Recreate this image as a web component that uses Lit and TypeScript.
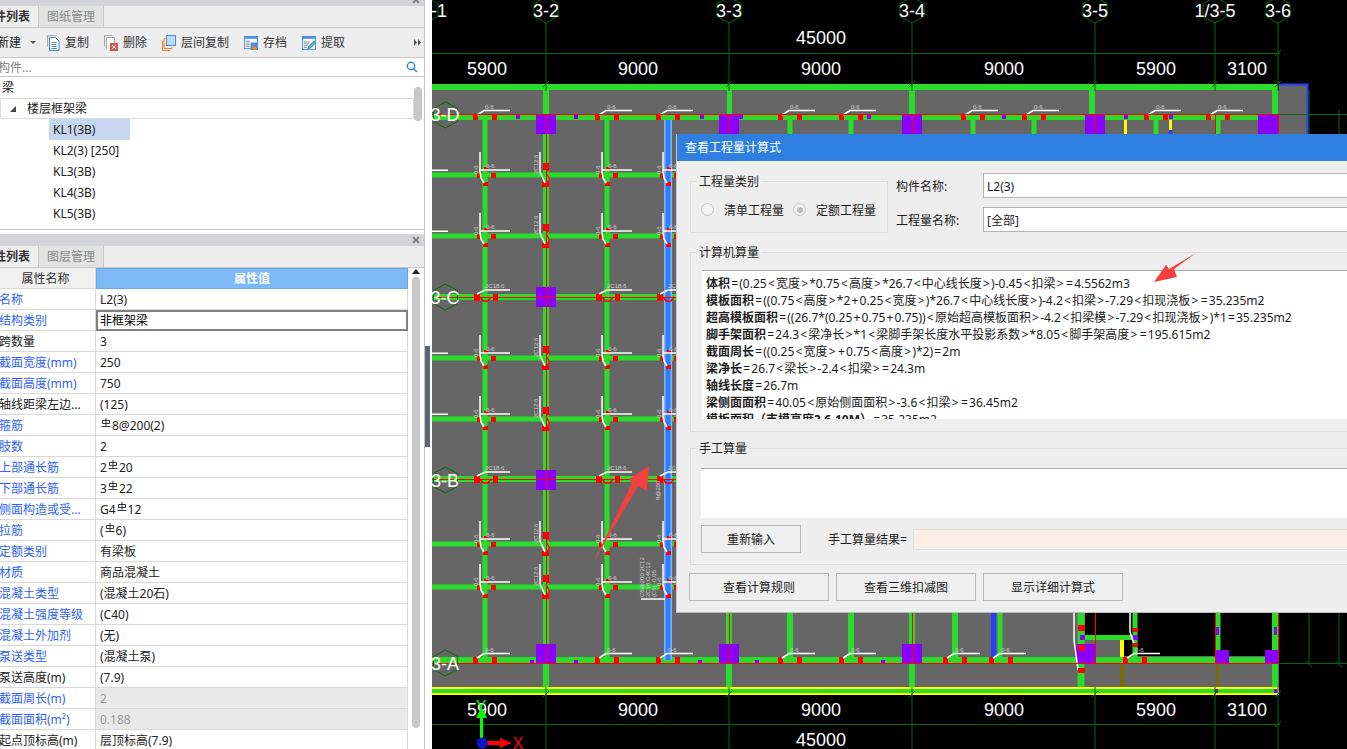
import { LitElement, html, css, svg } from 'lit';
import { customElement } from 'lit/decorators.js';

const GREEN = '#2adb2a';
const RED = '#ff0000';
const PURPLE = '#8a00ff';
const YELLOW = '#ffff00';
const AXIS = '#0b660b';
const GRAY = '#666666';

const rect = (x: number, y: number, w: number, h: number, fill: string) =>
  svg`<rect x=${x} y=${y} width=${w} height=${h} fill=${fill}></rect>`;
const line = (pts: string, color: string, width = 1) =>
  svg`<polyline points=${pts} fill="none" stroke=${color} stroke-width=${width}></polyline>`;
const hex = (x: number, y: number) =>
  svg`<polygon points="${x},${y - 13} ${x + 12},${y - 6.5} ${x + 12},${y + 6.5} ${x},${y + 13} ${x - 12},${y + 6.5} ${x - 12},${y - 6.5}" fill="none" stroke=${AXIS}></polygon>`;
const big = (x: number, y: number, t: string) =>
  svg`<text class="big" x=${x} y=${y} text-anchor="middle">${t}</text>`;
const tiny = (x: number, y: number, t: string, rot = false) =>
  svg`<text class="tiny" x=${x} y=${y} transform=${rot ? `rotate(-90 ${x} ${y})` : ''}>${t}</text>`;

// beam mark sitting on a main row: two red blocks plus white flag
function rowTag(x: number, y: number, t = '0-6') {
  return svg`
    ${rect(x - 12, y - 1, 5, 6, RED)}${rect(x + 7, y - 1, 5, 6, RED)}
    ${line(`${x - 8},${y} ${x - 1},${y - 4.5} ${x + 25},${y - 4.5}`, '#fff', 1.5)}
    ${tiny(x, y - 6, t)}`;
}

// mark at a secondary beam crossing
function junction(x: number, y: number) {
  return svg`
    ${rect(x - 8, y - 2, 4, 5, RED)}${rect(x + 6, y - 2, 5, 5, RED)}
    ${rect(x - 2, y + 7, 5, 4, RED)}${rect(x - 1, y - 8, 4, 4, RED)}
    ${line(`${x - 5},${y - 23} ${x - 5},${y - 3} ${x - 4},${y + 3} ${x - 1},${y + 8}`, '#fff', 1.5)}
    ${line(`${x - 5},${y - 5} ${x + 25},${y - 5}`, '#fff', 1.5)}
    ${tiny(x + 1, y - 7, '0-6')}${tiny(x - 7, y - 1, '0-6', true)}`;
}

function centerTag(y: number) {
  return svg`
    ${rect(543, y - 12, 6, 7, RED)}${rect(542, y + 7, 7, 5, RED)}
    <path d="M549 ${y - 5}q-5 2 -1 6q3 4 -1 6" fill="none" stroke=${RED} stroke-width="1.2"></path>
    ${line(`540,${y - 23} 540,${y - 3} 545,${y + 8}`, '#fff', 1.5)}
    ${tiny(538, y - 1, '2C12:6', true)}`;
}

function crossTag(x: number, y: number) {
  return svg`
    ${rect(x - 11, y - 3, 6, 7, RED)}${rect(x + 8, y - 3, 5, 7, RED)}
    <path d="M${x - 5} ${y}l3 4h5l3 -4" fill="none" stroke=${RED} stroke-width="1.5"></path>
    ${line(`${x - 8},${y - 3} ${x},${y - 7} ${x + 25},${y - 7}`, '#fff', 1.5)}
    ${tiny(x, y - 9, '2C18:6')}`;
}

@customElement('cad-canvas')
class CadCanvas extends LitElement {
  static styles = css`
    :host {
      display: block;
      position: absolute;
      inset: 0;
    }
    svg {
      display: block;
    }
    .big {
      font: 18px 'Liberation Sans', Arial, sans-serif;
      fill: #fff;
    }
    .tiny {
      font: 6px 'Liberation Sans', Arial, sans-serif;
      fill: #d0d0d0;
    }
    .xy {
      font: 16px 'Liberation Sans', Arial, sans-serif;
    }
  `;

  render() {
    const axes: [number, string][] = [
      [546, '3-2'], [729, '3-3'], [912, '3-4'], [1095, '3-5'], [1215, ''], [1278, '3-6']
    ];
    const mids = [485, 607, 668];
    const cross = [175, 236, 358, 419, 544, 587];
    const dTags = [485, 607, 668, 790, 851, 973, 1034, 1156, 1218];
    const aTags = [485, 607, 668, 790, 851, 955, 1001, 1135];
    const dDots = [516, 574, 700, 739, 867, 1002, 1124, 1169];
    const aDots = [530, 574, 698, 755, 881];
    const stubs = [790, 851, 973, 1034, 1156, 1218];
    const low: [number, number][] = [[790, 6], [851, 6], [955, 6], [1000, 5], [1135, 5], [1218, 5]];
    const through: [number, number][] = [[729, 6], [912, 6], [1081, 7], [1275, 6]];
    const dims: [number, string][] = [
      [487, '5900'], [638, '9000'], [821, '9000'], [1004, '9000'], [1156, '5900'], [1247, '3100']
    ];

    return html`<svg width="915" height="749" viewBox="432 0 915 749">
      ${rect(432, 0, 915, 749, '#000')}
      ${rect(432, 90, 847, 597, GRAY)}
      ${rect(1279, 85, 28, 60, GRAY)}
      ${line('1279,84.5 1307.5,84.5 1307.5,140', '#2a3cff', 2)}

      <!-- black bays bottom right -->
      ${rect(1085, 600, 187, 56, '#000')}
      ${rect(1085, 640, 35, 17, GRAY)}
      ${rect(1120, 640, 4, 17, YELLOW)}
      ${rect(1120, 663, 4, 24, '#7a6a00')}
      ${rect(1216, 663, 3, 24, '#7a6a00')}

      <!-- beams -->
      ${rect(432, 84, 846, 6, GREEN)}
      ${rect(432, 115, 846, 5, GREEN)}
      ${rect(432, 294, 300, 6, GREEN)}
      ${rect(432, 476, 300, 6, GREEN)}
      ${rect(432, 657, 846, 6, GREEN)}
      ${cross.map(y => rect(432, y - 2.5, 300, 5, GREEN))}
      ${rect(1085, 635, 50, 5, GREEN)}
      ${mids.map(x => rect(x - 2.5, 120, 5, 540, GREEN))}
      ${rect(543, 90, 6, 597, GREEN)}
      ${rect(727, 90, 5, 60, GREEN)}
      ${rect(909, 90, 6, 60, GREEN)}
      ${rect(1089, 90, 6, 25, GREEN)}
      ${rect(1272, 90, 6, 597, GREEN)}
      ${stubs.map(x => rect(x - 2.5, 120, 5, 30, GREEN))}
      ${low.map(([x, w]) => rect(x - w / 2, 600, w, 57, GREEN))}
      ${through.map(([x, w]) => rect(x - w / 2, 600, w, 87, GREEN))}
      ${rect(1124, 120, 3, 14, YELLOW)}
      ${rect(1169, 120, 3, 10, YELLOW)}
      ${rect(1169, 130, 3, 6, '#2a3cff')}
      ${rect(991, 600, 5, 57, '#2a3cff')}

      <!-- blue selected beam -->
      ${rect(664, 120, 8, 540, '#7fb2ff')}
      ${rect(665.5, 120, 5, 540, '#2f7ffb')}

      <!-- bottom edge beam -->
      ${rect(432, 687, 847, 8, YELLOW)}
      ${rect(432, 689, 846, 4, GREEN)}
      ${rect(1215, 689, 3, 4, PURPLE)}
      ${rect(1274, 689, 3, 4, PURPLE)}

      <!-- columns -->
      ${[[546, 114], [729, 114], [912, 114], [1095, 114], [1268, 114]].map(([x, y]) => rect(x - 10, y, 20, 20, PURPLE))}
      ${rect(536, 287, 20, 20, PURPLE)}
      ${rect(536, 470, 20, 20, PURPLE)}
      ${[536, 719, 902].map(x => rect(x, 644, 20, 19, PURPLE))}
      ${rect(1076, 644, 19, 19, PURPLE)}
      ${rect(1215, 650, 14, 13, PURPLE)}
      ${rect(1265, 650, 13, 13, PURPLE)}
      ${rect(1216, 627, 3, 8, PURPLE)}
      ${rect(1274, 627, 3, 8, PURPLE)}
      ${rect(1080, 635, 5, 5, PURPLE)}
      ${rect(1133, 635, 5, 5, PURPLE)}
      ${dDots.map(x => rect(x, 115, 4, 4, PURPLE))}
      ${aDots.map(x => rect(x, 660, 4, 3, PURPLE))}

      <!-- marks -->
      ${dTags.map(x => rowTag(x, 115))}
      ${aTags.map(x => rowTag(x, 658))}
      ${[297, 479].map(y => mids.map(x => crossTag(x, y)))}
      ${cross.map(y => mids.map(x => junction(x, y)))}
      ${cross.map(y => centerTag(y))}
      ${[175, 236, 358, 419].map(y => rect(432, y - 5.5, 16, 1.5, '#fff'))}
      ${line('1074,612 1074,640 1078,670', '#fff', 1.5)}
      ${rect(1078, 625, 7, 6, RED)}${rect(1078, 645, 7, 6, RED)}${rect(1078, 668, 7, 5, RED)}
      ${line('1130,612 1130,632 1134,644', '#fff', 1.5)}
      ${rect(1133, 628, 5, 4, RED)}${rect(1133, 643, 5, 4, RED)}
      ${line('641,599 665,599', '#fff', 1.5)}
      ${tiny(644, 597, 'C8@200 2C12', true)}${tiny(650, 597, '2C18 G4C12', true)}${tiny(656, 597, '(C6) -0.05', true)}
      ${tiny(660, 500, '8@200', true)}

      <!-- red centre lines -->
      ${rect(432, 114, 846, 1, RED)}
      ${rect(432, 663, 846, 1, RED)}
      ${rect(432, 479, 300, 1, RED)}
      ${rect(432, 297, 300, 1, RED)}
      ${rect(546, 114, 1, 549, RED)}
      ${[729, 912, 1095, 1215, 1278].map(x => rect(x, 114, 1, 30, RED))}
      ${[729, 912, 1095, 1215, 1278].map(x => rect(x, 600, 1, 63, RED))}

      <!-- axis lines and dimensions -->
      ${axes.map(([x]) => line(`${x},22 ${x},91`, AXIS))}
      ${axes.map(([x]) => line(`${x},687 ${x},749`, AXIS))}
      ${axes.map(([x]) => line(`${x - 3},87 ${x + 3},81`, AXIS))}
      ${axes.map(([x]) => line(`${x - 3},697 ${x + 3},691`, AXIS))}
      ${line('432,53.5 1280,53.5', AXIS)}
      ${line('432,724.5 1280,724.5', AXIS)}
      ${line('1275,56 1281,50', AXIS)}
      ${line('1275,727 1281,721', AXIS)}
      ${line('1279,114.5 1347,114.5', AXIS)}
      ${line('1278,663.5 1347,663.5', AXIS)}
      ${line('1309,90 1309,134', AXIS)}
      ${line('1339,110 1339,134', AXIS)}
      ${line('1309,612 1309,664', AXIS)}
      ${line('1339,612 1339,664', AXIS)}
      ${line('1306,661 1312,667', AXIS)}
      ${line('1336,661 1342,667', AXIS)}

      ${[[546, 10], [729, 10], [912, 10], [1095, 10], [1215, 10], [1278, 10]].map(([x, y]) => hex(x, y))}
      ${hex(426, 10)}
      ${[115, 297, 480, 663].map(y => hex(445.5, y))}
      ${big(439, 17, '-1')}
      ${axes.filter(a => a[1]).map(([x, t]) => big(x, 17, t))}
      ${big(1215, 17, '1/3-5')}
      ${big(445, 121, '3-D')}
      ${big(445, 304, '3-C')}
      ${big(445, 487, '3-B')}
      ${big(445, 670, '3-A')}
      ${big(821, 44, '45000')}
      ${dims.map(([x, t]) => big(x, 75, t))}
      ${dims.map(([x, t]) => big(x, 716, t))}
      ${big(821, 746, '45000')}

      <!-- ucs icon -->
      ${rect(480, 718, 3, 22, '#00ff00')}
      <polygon points="481.5,707 487,718 476,718" fill="#00ff00"></polygon>
      <text class="xy" x="481" y="712" text-anchor="middle" fill="#00ff00">Y</text>
      ${rect(486, 741, 14, 4, RED)}
      <polygon points="512,743 500,738 500,748" fill=${RED}></polygon>
      <text class="xy" x="518" y="749" text-anchor="middle" fill=${RED}>X</text>
      <circle cx="482" cy="743" r="5.5" fill="#0a14c8"></circle>

      <!-- annotation arrow -->
      <polygon points="593,563 632,483 629,479 649,466 647,491 638,486" fill="#f2403f"></polygon>
    </svg>`;
  }
}

const rebar = html`<svg class="rebar" width="10" height="10" viewBox="0 0 9 10">
  <path d="M1 2.500h7v3H1zM4.500 0v8.500M0 8.500h9" fill="none" stroke="#222" stroke-width="0.9"></path>
</svg>`;

type Row = { k: string; v: string; blue?: boolean; off?: boolean; edit?: boolean };

const rows: Row[] = [
  { k: '名称', v: 'L2(3)', blue: true },
  { k: '结构类别', v: '非框架梁', blue: true, edit: true },
  { k: '跨数量', v: '3' },
  { k: '截面宽度(mm)', v: '250', blue: true },
  { k: '截面高度(mm)', v: '750', blue: true },
  { k: '轴线距梁左边...', v: '(125)' },
  { k: '箍筋', v: '$8@200(2)', blue: true },
  { k: '肢数', v: '2', blue: true },
  { k: '上部通长筋', v: '2$20', blue: true },
  { k: '下部通长筋', v: '3$22', blue: true },
  { k: '侧面构造或受...', v: 'G4$12', blue: true },
  { k: '拉筋', v: '($6)', blue: true },
  { k: '定额类别', v: '有梁板', blue: true },
  { k: '材质', v: '商品混凝土', blue: true },
  { k: '混凝土类型', v: '(混凝土20石)', blue: true },
  { k: '混凝土强度等级', v: '(C40)', blue: true },
  { k: '混凝土外加剂', v: '(无)', blue: true },
  { k: '泵送类型', v: '(混凝土泵)', blue: true },
  { k: '泵送高度(m)', v: '(7.9)' },
  { k: '截面周长(m)', v: '2', blue: true, off: true },
  { k: '截面面积(m²)', v: '0.188', blue: true, off: true },
  { k: '起点顶标高(m)', v: '层顶标高(7.9)' }
];

const formulas: [string, string][] = [
  ['体积', '=(0.25<宽度>*0.75<高度>*26.7<中心线长度>)-0.45<扣梁>=4.5562m3'],
  ['模板面积', '=((0.75<高度>*2+0.25<宽度>)*26.7<中心线长度>)-4.2<扣梁>-7.29<扣现浇板>=35.235m2'],
  ['超高模板面积', '=((26.7*(0.25+0.75+0.75))<原始超高模板面积>-4.2<扣梁模>-7.29<扣现浇板>)*1=35.235m2'],
  ['脚手架面积', '=24.3<梁净长>*1<梁脚手架长度水平投影系数>*8.05<脚手架高度>=195.615m2'],
  ['截面周长', '=((0.25<宽度>+0.75<高度>)*2)=2m'],
  ['梁净长', '=26.7<梁长>-2.4<扣梁>=24.3m'],
  ['轴线长度', '=26.7m'],
  ['梁侧面面积', '=40.05<原始侧面面积>-3.6<扣梁>=36.45m2'],
  ['模板面积（支模高度3.6-10M）', '=35.235m2']
];

@customElement('app-root')
class AppRoot extends LitElement {
  static styles = css`
    :host {
      display: flex;
      width: 1347px;
      height: 749px;
      overflow: hidden;
      background: #fff;
      font: 12px/17px 'Noto Sans', 'Noto Sans CJK SC', sans-serif;
      color: #222;
    }
    .side {
      width: 424px;
      height: 749px;
      flex: none;
      overflow: hidden;
      border-right: 1px solid #c4c4c4;
    }
    .grip {
      width: 7px;
      flex: none;
    }
    .grip div {
      width: 5px;
      height: 101px;
      margin-top: 346px;
      background: #5e6670;
    }
    .canvas {
      position: relative;
      flex: 1;
      overflow: hidden;
      background: #000;
    }
    .title {
      height: 6px;
      background: #d3d4d9;
      display: flex;
      justify-content: flex-end;
      overflow: hidden;
    }
    .title.full {
      height: 12px;
      margin-top: 4px;
    }
    .x {
      width: 8px;
      height: 8px;
      margin: 2px 4px 0 0;
      flex: none;
    }
    .title:not(.full) .x {
      margin-top: -4px;
    }
    .tabs {
      height: 21px;
      display: flex;
      background: #eeeeee;
      border-bottom: 1px solid #c8c8c8;
    }
    .tab {
      width: 38px;
      line-height: 22px;
      overflow: hidden;
      white-space: nowrap;
      border-right: 1px solid #c8c8c8;
      color: #333;
      font-weight: 600;
    }
    .tab span {
      margin-left: -6px;
    }
    .tab.off {
      width: 64px;
      text-align: center;
      background: #e2e2e2;
      color: #888;
      font-weight: 400;
    }
    .toolbar {
      height: 29px;
      display: flex;
      align-items: center;
      gap: 15px;
      background: #eeeeee;
      border-bottom: 1px solid #c8c8c8;
    }
    .tool {
      display: flex;
      align-items: center;
      gap: 5px;
      white-space: nowrap;
      color: #333;
    }
    .tool svg {
      flex: none;
    }
    .new {
      width: 35px;
      flex: none;
      margin-left: -3px;
      display: flex;
      align-items: center;
      gap: 9px;
      white-space: nowrap;
    }
    .caret {
      width: 0;
      height: 0;
      border: 3px solid transparent;
      border-top: 3px solid #555;
      margin-top: 3px;
    }
    .more {
      margin-left: auto;
      margin-right: 3px;
    }
    .search {
      height: 18px;
      display: flex;
      align-items: center;
      justify-content: space-between;
      border-bottom: 1px solid #c8c8c8;
      color: #808080;
      padding-right: 6px;
    }
    .search span {
      margin-left: -2px;
    }
    .tree {
      height: 152px;
      display: flex;
      border-bottom: 1px solid #c8c8c8;
    }
    .nodes {
      flex: 1;
    }
    .node {
      height: 21px;
      line-height: 21px;
      display: flex;
      align-items: center;
      color: #222;
    }
    .node.root {
      padding-left: 2px;
    }
    .node.group {
      padding-left: 9px;
      gap: 11px;
    }
    .tri {
      width: 0;
      height: 0;
      border-left: 6px solid transparent;
      border-bottom: 6px solid #444;
    }
    .node.leaf {
      margin-left: 49px;
      padding-left: 4px;
      width: 77px;
      white-space: pre;
    }
    .node.sel {
      background: #c6d7ef;
    }
    .thumb {
      background: #c8c8c8;
      border-radius: 4px;
    }
    .tree .thumb {
      width: 8px;
      height: 34px;
      margin: 10px 2px 0 0;
    }
    .props {
      display: flex;
    }
    .grid {
      width: 408px;
      flex: none;
      display: grid;
      grid-template-columns: 96px 312px;
      grid-auto-rows: 21px;
    }
    .cell {
      border-bottom: 1px solid #d9d9d9;
      border-right: 1px solid #d9d9d9;
      line-height: 22px;
      white-space: nowrap;
      overflow: hidden;
      box-sizing: border-box;
    }
    .head {
      text-align: center;
      padding-right: 4px;
      background: #f0f0f0;
      color: #333;
    }
    .head.val {
      background: #7db8f7;
      color: #fff;
      font-weight: 700;
      padding: 0;
      border: 1px solid #69a8ee;
      line-height: 20px;
    }
    .key.blue {
      color: #2f62f5;
    }
    .key {
      color: #222;
      text-indent: -1px;
    }
    .val {
      padding-left: 4px;
    }
    .off {
      background: #e9e9e9;
      color: #9a9a9a;
    }
    .edit {
      border: 2px solid #7f7f7f;
      line-height: 18px;
      padding-left: 2px;
      color: #000;
    }
    .rebar {
      vertical-align: 2px;
      margin: 0 1px;
    }
    .bar {
      flex: 1;
      display: flex;
      flex-direction: column;
      align-items: center;
    }
    .up {
      width: 0;
      height: 0;
      margin-top: 1px;
      border: 4px solid transparent;
      border-bottom: 5px solid #222;
      border-top: 0;
    }
    .bar .thumb {
      width: 8px;
      height: 451px;
      margin-top: 3px;
    }
    .dialog {
      position: absolute;
      left: 245px;
      top: 134px;
      width: 720px;
      height: 478px;
      background: #eeeeee;
      border-bottom: 1px solid #b8bcc4;
      box-shadow: -1px 0 0 #c5cbd6;
      font-size: 12px;
      color: #1c1c1c;
    }
    .cap {
      height: 27px;
      line-height: 27px;
      padding-left: 8px;
      background: #2e7fdf;
      color: #fff;
    }
    .body {
      padding-left: 13px;
    }
    .top {
      display: flex;
      margin-top: 20px;
    }
    .group {
      position: relative;
      border: 1px solid #dcdcdc;
      box-sizing: border-box;
    }
    .legend {
      position: absolute;
      left: 6px;
      top: -9px;
      padding: 0 2px;
      background: #eeeeee;
    }
    .kind {
      width: 198px;
      height: 52px;
      display: flex;
      align-items: center;
      padding: 7px 0 0 10px;
    }
    .radio {
      width: 11px;
      height: 11px;
      margin-top: -2px;
      border: 1px solid #c4c4c4;
      border-radius: 50%;
      background: #f4f4f4;
      margin-right: 10px;
      flex: none;
      display: flex;
      align-items: center;
      justify-content: center;
    }
    .radio i {
      width: 6px;
      height: 6px;
      border-radius: 50%;
      background: #b8b8b8;
    }
    .kind span {
      margin-right: 9px;
      white-space: nowrap;
    }
    .fields {
      margin: -8px 0 0 8px;
      display: grid;
      grid-template-columns: 87px 400px;
      grid-auto-rows: 25px;
      row-gap: 9px;
      align-items: center;
    }
    .fields span {
      padding-top: 2px;
    }
    .input {
      height: 25px;
      line-height: 25px;
      box-sizing: border-box;
      background: #fff;
      border: 1px solid #b4b4b4;
      padding-left: 3px;
    }
    .calc {
      width: 700px;
      height: 180px;
      margin-top: 19px;
      padding: 17px 0 0 11px;
    }
    .text {
      height: 149px;
      box-sizing: border-box;
      overflow: hidden;
      background: #fff;
      border-top: 1px solid #a8a8a8;
      padding: 4px 0 0 4px;
      white-space: nowrap;
    }
    .text b {
      font-weight: 700;
    }
    .op {
      font-style: normal;
      margin: 0 1.2px;
    }
    .manual {
      width: 700px;
      height: 117px;
      margin-top: 16px;
      padding: 19px 0 0 10px;
    }
    .area {
      height: 49px;
      background: #fff;
      border-top: 1px solid #aeaeb6;
    }
    .redo {
      display: flex;
      align-items: center;
      margin-top: 7px;
    }
    .redo span {
      white-space: nowrap;
      flex: none;
    }
    .btn {
      height: 28px;
      line-height: 27px;
      flex: none;
      box-sizing: border-box;
      text-align: center;
      white-space: nowrap;
      border: 1px solid #b8b8b8;
      background: #efefef;
    }
    .redo .btn {
      width: 100px;
      margin-right: 27px;
    }
    .result {
      flex: none;
      width: 600px;
      height: 21px;
      margin-left: 6px;
      background: #f9efe6;
      border: 1px solid #e6e0da;
      box-sizing: border-box;
    }
    .foot {
      display: flex;
      gap: 7px;
      margin: 8px 0 0 -1px;
    }
    .foot .btn {
      width: 140px;
    }
    .note {
      position: absolute;
      left: 476px;
      top: 118px;
    }
  `;

  private close() {
    return html`<svg class="x" viewBox="0 0 8 8"><path d="M1 1l6 6M7 1l-6 6" stroke="#666" stroke-width="1.4"></path></svg>`;
  }

  private toolbar() {
    return html`<div class="toolbar">
      <div class="new"><span>新建</span><i class="caret"></i></div>
      <div class="tool">
        <svg width="13" height="16" viewBox="0 0 13 16">
          <path d="M.5 11.500V.5h8" fill="none" stroke="#a8a8a8"></path>
          <path d="M2.500 2.500h6l3.500 3.500v9.500h-9.500z" fill="#fff" stroke="#3d86d8"></path>
          <path d="M4.500 7.500h5M4.500 9.500h5M4.500 11.500h5M4.500 13.500h5" stroke="#3d86d8"></path>
        </svg>复制
      </div>
      <div class="tool">
        <svg width="14" height="16" viewBox="0 0 14 16">
          <path d="M.5 11.500V.5h8" fill="none" stroke="#a8a8a8"></path>
          <path d="M2.500 13.500V2.500h8v6" fill="#fff" stroke="#a8a8a8"></path>
          <rect x="6" y="8" width="8" height="8" fill="#d9534f"></rect>
          <path d="M8 10l4 4M12 10l-4 4" stroke="#fff"></path>
        </svg>删除
      </div>
      <div class="tool">
        <svg width="14" height="16" viewBox="0 0 14 16">
          <path d="M3.500 3.500H2V13.500H10V12" fill="none" stroke="#f0801e"></path>
          <path d="M.5 6v9.500H8" fill="none" stroke="#f0801e"></path>
          <rect x="4.500" y=".5" width="9" height="10" fill="#bcd8fb" stroke="#4a90e2"></rect>
        </svg>层间复制
      </div>
      <div class="tool">
        <svg width="14" height="14" viewBox="0 0 15 15">
          <rect x=".5" y=".5" width="14" height="13" fill="#f4f7fb" stroke="#4a90e2"></rect>
          <rect y="0" width="15" height="3" fill="#4a90e2"></rect>
          <path d="M2 5.500h4M2 7.500h4M2 9.500h4M2 11.500h4" stroke="#8a8a8a"></path>
          <rect x="7" y="7" width="8" height="8" fill="#4a90e2"></rect>
          <rect x="9" y="11" width="4" height="4" fill="#f0801e"></rect>
        </svg>存档
      </div>
      <div class="tool">
        <svg width="14" height="14" viewBox="0 0 15 15">
          <rect x=".5" y=".5" width="14" height="14" fill="#f4f7fb" stroke="#4a90e2"></rect>
          <rect y="0" width="15" height="3" fill="#4a90e2"></rect>
          <path d="M2 6.500h6M2 8.500h5M2 10.500h4M2 12.500h3" stroke="#8a8a8a"></path>
          <path d="M6 14l1-3 6-6 2 2-6 6z" fill="#3fb8d8" stroke="#555" stroke-width=".5"></path>
        </svg>提取
      </div>
      <svg class="more" width="7" height="7" viewBox="0 0 7 7"><path d="M0 0l3 3.500-3 3.500zM4 0l3 3.500-3 3.500z" fill="#555"></path></svg>
    </div>`;
  }

  private value(v: string) {
    const parts = v.split('$');
    return parts.map((p, i) => (i ? html`${rebar}${p}` : p));
  }

  // the source program sets < > = + wider than the latin font does
  private formula(f: string) {
    return f.split(/([<>=+])/).map((p, i) => (i % 2 ? html`<i class="op">${p}</i>` : p));
  }

  render() {
    return html`
      <div class="side">
        <div class="title">${this.close()}</div>
        <div class="tabs">
          <div class="tab"><span>件列表</span></div>
          <div class="tab off">图纸管理</div>
        </div>
        ${this.toolbar()}
        <div class="search">
          <span>构件...</span>
          <svg width="12" height="12" viewBox="0 0 12 12">
            <circle cx="5" cy="5" r="3.700" fill="none" stroke="#3a87c8" stroke-width="1.400"></circle>
            <path d="M7.500 7.500l3.500 3.500" stroke="#3a87c8" stroke-width="1.600"></path>
          </svg>
        </div>
        <div class="tree">
          <div class="nodes">
            <div class="node root">梁</div>
            <div class="node group"><i class="tri"></i>楼层框架梁</div>
            <div class="node leaf sel">KL1(3B)</div>
            <div class="node leaf">KL2(3) [250]</div>
            <div class="node leaf">KL3(3B)</div>
            <div class="node leaf">KL4(3B)</div>
            <div class="node leaf">KL5(3B)</div>
          </div>
          <div class="thumb"></div>
        </div>
        <div class="title full">${this.close()}</div>
        <div class="tabs">
          <div class="tab"><span>性列表</span></div>
          <div class="tab off">图层管理</div>
        </div>
        <div class="props">
          <div class="grid">
            <div class="cell head">属性名称</div>
            <div class="cell head val">属性值</div>
            ${rows.map(
              r => html`
                <div class="cell key ${r.blue ? 'blue' : ''}">${r.k}</div>
                <div class="cell val ${r.off ? 'off' : ''} ${r.edit ? 'edit' : ''}">${this.value(r.v)}</div>
              `
            )}
          </div>
          <div class="bar">
            <i class="up"></i>
            <div class="thumb"></div>
          </div>
        </div>
      </div>
      <div class="grip"><div></div></div>
      <div class="canvas">
        <cad-canvas></cad-canvas>
        <div class="dialog">
          <div class="cap">查看工程量计算式</div>
          <div class="body">
            <div class="top">
              <div class="group kind">
                <div class="legend">工程量类别</div>
                <i class="radio"></i><span>清单工程量</span>
                <i class="radio"><i></i></i><span>定额工程量</span>
              </div>
              <div class="fields">
                <span>构件名称:</span>
                <div class="input">L2(3)</div>
                <span>工程量名称:</span>
                <div class="input">[全部]</div>
              </div>
            </div>
            <div class="group calc">
              <div class="legend">计算机算量</div>
              <div class="text">
                ${formulas.map(([k, f]) => html`<div><b>${k}</b>${this.formula(f)}</div>`)}
              </div>
            </div>
            <div class="group manual">
              <div class="legend">手工算量</div>
              <div class="area"></div>
              <div class="redo">
                <div class="btn">重新输入</div>
                <span>手工算量结果=</span>
                <div class="result"></div>
              </div>
            </div>
            <div class="foot">
              <div class="btn">查看计算规则</div>
              <div class="btn">查看三维扣减图</div>
              <div class="btn">显示详细计算式</div>
            </div>
          </div>
          <svg class="note" width="44" height="30" viewBox="0 0 44 30">
            <polygon points="43,1 21,17 24,25 1,30 13,13 16,17" fill="#f2403f"></polygon>
          </svg>
        </div>
      </div>
    `;
  }
}
